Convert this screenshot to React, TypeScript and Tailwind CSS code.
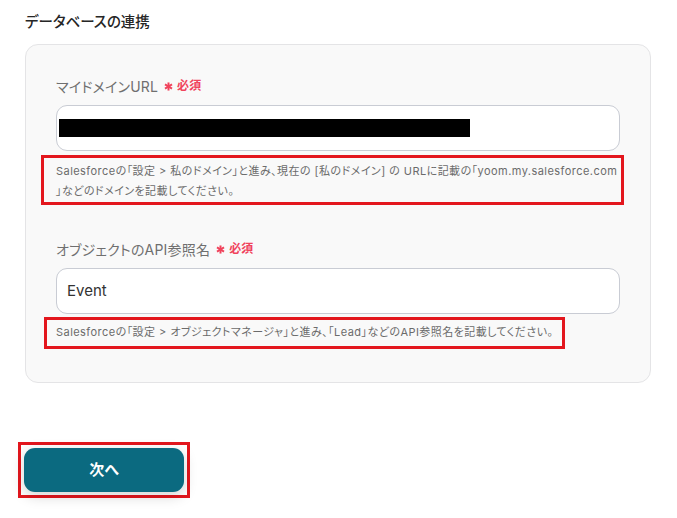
const font = { fontFamily: '"Inter", "Noto Sans CJK JP", sans-serif' };

function Star() {
  return (
    <svg width="9" height="9" viewBox="0 0 10 10" className="shrink-0">
      <g stroke="currentColor" strokeWidth="2.2" strokeLinecap="butt">
        <line x1="5" y1="0.5" x2="5" y2="9.5" />
        <line x1="1.1" y1="2.75" x2="8.9" y2="7.25" />
        <line x1="1.1" y1="7.25" x2="8.9" y2="2.75" />
      </g>
    </svg>
  );
}

function Required() {
  return (
    <span className="ml-[6px] inline-flex items-center gap-[4px] text-[#f0435c]">
      <Star />
      <span className="text-[12px] font-semibold">必須</span>
    </span>
  );
}

function Field({
  label,
  children,
  help,
  helpGap,
  box,
}: {
  label: string;
  children: React.ReactNode;
  help: React.ReactNode;
  helpGap: string;
  box: string;
}) {
  return (
    <div className="flex flex-col">
      <div className="flex h-[20px] items-center text-[14px] font-normal tracking-[0.2px] text-[#6f6f6f]">
        {label}
        <Required />
      </div>
      <div className="mt-[9px] flex h-[46px] items-center rounded-[11px] border border-[#c9ccd4] bg-white px-[10px]">
        {children}
      </div>
      <div className={`relative ${helpGap}`}>
        {help}
        <div className={`pointer-events-none absolute border-[3px] border-[#e3161d] ${box}`} />
      </div>
    </div>
  );
}

export default function App() {
  return (
    <div
      className="min-h-[518px] w-[677px] bg-white pl-[25px] pt-[12px] [font-feature-settings:'palt']"
      style={font}
    >
      <h2 className="text-[14.5px] leading-[20px] font-medium text-[#262626]">データベースの連携</h2>

      <div className="mt-[12px] w-[626px] rounded-[13px] border border-[#e4e4e6] bg-[#f9f9f9] px-[30px] pt-[31px] pb-[40px]">
        <Field
          label="マイドメインURL"
          helpGap="mt-[10px]"
          box="-left-[15px] -right-[4px] -top-[6px] -bottom-[4px]"
          help={
            <p className="text-[11px] leading-[20px] tracking-[0.45px] text-[#6b6b6b]">
              <span className="whitespace-nowrap">
                Salesforceの「設定 &gt; 私のドメイン」と進み、現在の [私のドメイン] の URLに記載の「yoom.my.salesforce.com
              </span>
              <br />
              」などのドメインを記載してください。
            </p>
          }
        >
          <div className="-ml-[8px] h-[18px] w-[411px] bg-black" />
        </Field>

        <div className="mt-[38px]">
          <Field
            label="オブジェクトのAPI参照名"
            helpGap="mt-[8px]"
            box="-left-[12px] -top-[5px] h-[32px] w-[521px]"
            help={
              <p className="whitespace-nowrap text-[11px] leading-[20px] tracking-[0.45px] text-[#6b6b6b]">
                Salesforceの「設定 &gt; オブジェクトマネージャ」と進み、「Lead」などのAPI参照名を記載してください。
              </p>
            }
          >
            <span className="text-[15px] text-[#333]">Event</span>
          </Field>
        </div>
      </div>

      <div className="mt-[59px] w-fit border-[3px] border-[#e3161d] p-[3px] -ml-[7px]">
        <button className="flex h-[44px] w-[160px] items-center justify-center rounded-[11px] bg-[#0b6a80] text-[15px] font-bold text-white shadow-[0_4px_14px_rgba(0,0,0,0.18)]">
          次へ
        </button>
      </div>
    </div>
  );
}
